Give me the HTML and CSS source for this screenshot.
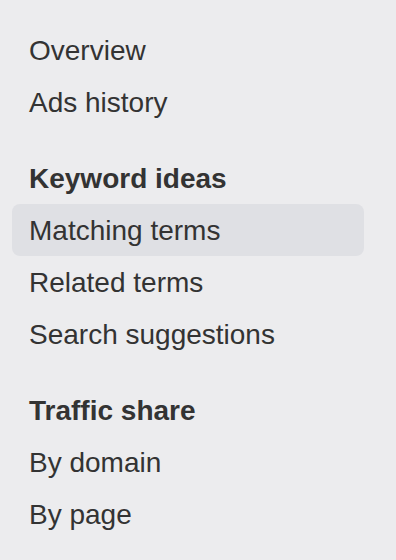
FILE: index.html
```html
<!DOCTYPE html>
<html lang="en">
<head>
  <meta charset="UTF-8" />
  <meta name="viewport" content="width=device-width, initial-scale=1.0">
  <title>Keyword navigation</title>
  <link rel="stylesheet" href="styles.css">
</head>
<body>
  <nav class="side-nav">
    <ul class="nav-group">
      <li><a class="nav-item" href="#">Overview</a></li>
      <li><a class="nav-item" href="#">Ads history</a></li>
    </ul>

    <ul class="nav-group">
      <li class="nav-title">Keyword ideas</li>
      <li><a class="nav-item active" href="#">Matching terms</a></li>
      <li><a class="nav-item" href="#">Related terms</a></li>
      <li><a class="nav-item" href="#">Search suggestions</a></li>
    </ul>

    <ul class="nav-group">
      <li class="nav-title">Traffic share</li>
      <li><a class="nav-item" href="#">By domain</a></li>
      <li><a class="nav-item" href="#">By page</a></li>
    </ul>
  </nav>
</body>
</html>
```
FILE: styles.css
```css
:root {
  --bg: #ececee;
  --active: #dfe0e4;
  --txt: #333333;
}
* { box-sizing: border-box; }
html, body {
  margin: 0;
  background: var(--bg);
}
body {
  font-family: 'Liberation Sans', Arial, sans-serif;
  color: var(--txt);
  padding: 24px 32px 0 12px;
}
.side-nav {
  display: flex;
  flex-direction: column;
  gap: 24px;
}
.nav-group {
  list-style: none;
  margin: 0;
  padding: 0;
}
.nav-title,
.nav-item {
  display: block;
  height: 52px;
  line-height: 53px;
  padding-left: 17px;
  font-size: 28px;
  white-space: nowrap;
}
.nav-title {
  font-weight: bold;
}
.nav-item {
  color: var(--txt);
  text-decoration: none;
  border-radius: 8px;
}
.nav-item.active {
  background: var(--active);
}
```
